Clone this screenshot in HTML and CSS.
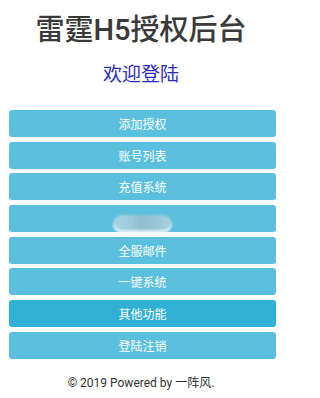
FILE: index.html
```html
<!DOCTYPE html>
<html lang="zh-CN">
<head>
<meta charset="utf-8">
<meta name="viewport" content="width=282">
<title>雷霆H5授权后台</title>
<link rel="stylesheet" href="styles.css">
</head>
<body>
<div class="page">
  <h1 class="title">雷霆H5授权后台</h1>
  <h2 class="welcome">欢迎登陆</h2>
  <nav class="menu">
    <a class="btn" href="#">添加授权</a>
    <a class="btn" href="#">账号列表</a>
    <a class="btn" href="#">充值系统</a>
    <a class="btn btn-masked" href="#"><span class="mask"></span></a>
    <a class="btn" href="#">全服邮件</a>
    <a class="btn" href="#">一键系统</a>
    <a class="btn btn-active" href="#">其他功能</a>
    <a class="btn" href="#">登陆注销</a>
  </nav>
  <footer class="footer">© 2019 Powered by 一阵风.</footer>
</div>
</body>
</html>
```
FILE: styles.css
```css
html, body {
  margin: 0;
  padding: 0;
  background: #ffffff;
}
body {
  font-family: Roboto, "Noto Sans CJK SC", sans-serif;
  color: #333333;
}
.page {
  width: 282px;
  overflow: hidden;
}
.title {
  margin: 10px 0 0 0;
  font-size: 29px;
  line-height: 40px;
  font-weight: 500;
  text-align: center;
  color: #3a3a3a;
}
.welcome {
  margin: 11px 0 0 0;
  font-size: 19px;
  line-height: 28px;
  font-weight: 400;
  text-align: center;
  color: #2a2ac2;
}
.menu {
  margin-top: 21px;
  padding: 0 6px 0 9px;
  display: flex;
  flex-direction: column;
  gap: 4.67px;
}
.btn {
  position: relative;
  display: flex;
  align-items: center;
  justify-content: center;
  height: 27px;
  border-radius: 3px;
  background: #5bc0de;
  color: #ffffff;
  font-size: 12px;
  text-decoration: none;
}
.btn-active {
  background: #31b0d5;
}
.mask {
  position: absolute;
  left: 104px;
  top: 10px;
  width: 59px;
  height: 18px;
  border-radius: 9px;
  background: linear-gradient(90deg, #a8d3e2 0%, #9fcbd9 30%, #8fbfcf 45%, #97c5d5 70%, #a6d1e0 100%);
  box-shadow: inset 0 -3px 0 rgba(235, 245, 250, 0.9);
  filter: blur(1px);
}
.footer {
  margin-top: 14px;
  font-size: 12px;
  line-height: 20px;
  text-align: center;
  color: #333333;
}
```
